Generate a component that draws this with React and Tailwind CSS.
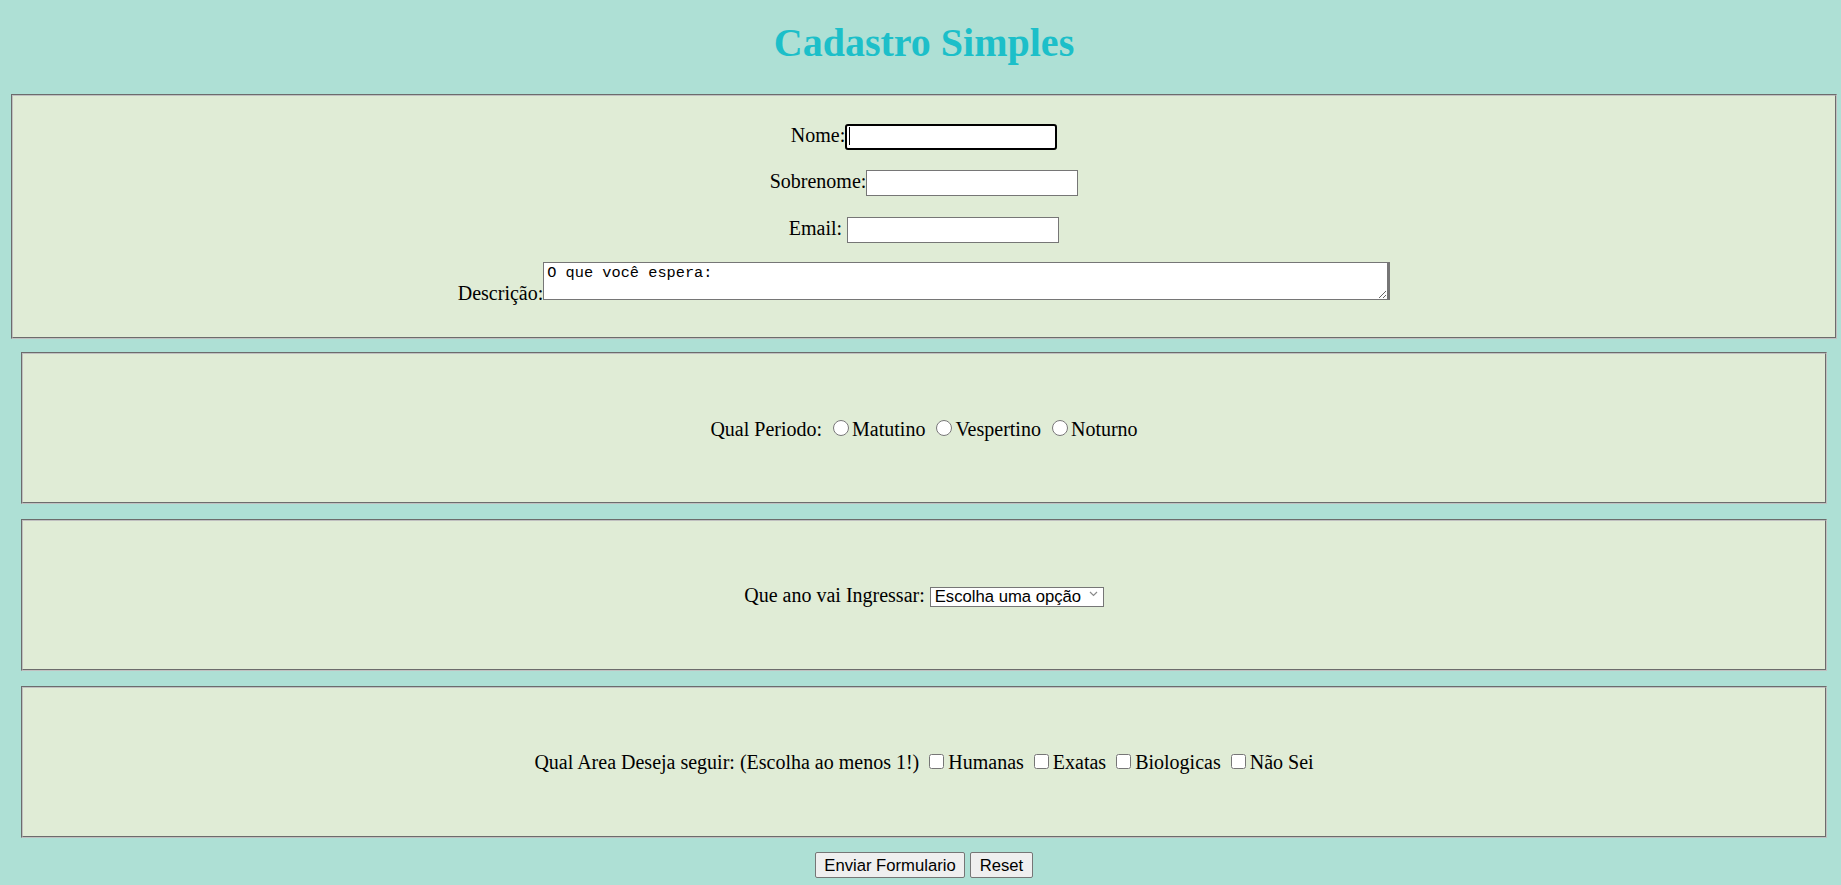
import React from 'react';

const boxClass = 'border-2 [border-style:groove] border-[#c0c0c0] bg-[#e0ecd6]';
const ctrlFont = "font-['Liberation_Sans',Arial,sans-serif] text-[16.67px]";
const inputClass = `w-[212px] h-[26px] px-[3px] bg-white border border-[#767676] align-baseline text-black ${ctrlFont}`;

const Radio = ({ name }) => (
    <input type="radio" name={name} className="w-[16px] h-[16px] ml-[6px] mr-[3px] mt-[4px] mb-0 align-baseline" />
);

const Check = () => (
    <input type="checkbox" className="w-[15px] h-[15px] ml-[5px] mr-[4px] mt-[4px] mb-[2px] align-baseline" />
);

const OptionBox = ({ children, className = '' }) => (
    <div className={`ml-[21px] w-[1806px] h-[152px] flex items-center justify-center ${boxClass} ${className}`}>
        <p className="leading-[24px] whitespace-nowrap">{children}</p>
    </div>
);

export default function App() {
    return (
        <div className="min-h-screen bg-[#aee0d5] pt-[21px] text-black text-[20px] font-['Liberation_Serif','Times_New_Roman',serif]">
            <div className="ml-[11px] w-[1826px]">
                <h1 className="text-center text-[40px] leading-[44px] font-bold text-[#1cbfc9] mb-[29px]">
                    Cadastro Simples
                </h1>
            </div>

            <form onSubmit={(e) => e.preventDefault()}>
                <div className={`ml-[11px] w-[1826px] ${boxClass} pt-[27px] pb-[37px] flex flex-col items-center`}>
                    <div className="h-[26px] leading-[24px] whitespace-nowrap">
                        Nome:
                        <span className="relative inline-block align-baseline">
                            <input type="text" className={`${inputClass} border-2 border-black rounded-[3px]`} />
                            <span className="absolute left-[4px] top-[4px] w-px h-[18px] bg-black" />
                        </span>
                    </div>
                    <div className="h-[26px] leading-[24px] mt-[20px] whitespace-nowrap">
                        Sobrenome:<input type="text" className={inputClass} />
                    </div>
                    <div className="h-[26px] leading-[24px] mt-[21px] whitespace-nowrap">
                        Email: <input type="email" className={inputClass} />
                    </div>
                    <div className="h-[38px] leading-[20px] mt-[20px] whitespace-nowrap">
                        Descrição:<textarea
                            defaultValue="O que você espera:"
                            className="align-baseline w-[847px] h-[38px] border border-[#767676] border-r-[3px] bg-white pl-[3px] pt-[1px] text-black font-['Liberation_Mono','DejaVu_Sans_Mono',monospace] text-[15.3px] leading-[18px]"
                        />
                    </div>
                </div>

                <OptionBox className="mt-[13px]">
                    Qual Periodo: <Radio name="periodo" />Matutino <Radio name="periodo" />Vespertino <Radio name="periodo" />Noturno
                </OptionBox>

                <OptionBox className="mt-[15px]">
                    Que ano vai Ingressar:{' '}
                    <span className="relative inline-block align-baseline">
                        <select className={`appearance-none w-[174px] h-[20px] bg-white border border-[#767676] pl-[4px] pr-[20px] align-baseline text-black leading-[18px] ${ctrlFont}`}>
                            <option>Escolha uma opção</option>
                            <option>2024</option>
                            <option>2025</option>
                        </select>
                        <svg className="absolute right-[6px] top-[8px] pointer-events-none" width="9" height="6" viewBox="0 0 9 6" fill="none">
                            <path d="M1 1l3.5 3.5L8 1" stroke="#8a8a8a" strokeWidth="1.2" />
                        </svg>
                    </span>
                </OptionBox>

                <OptionBox className="mt-[15px]">
                    Qual Area Deseja seguir: (Escolha ao menos 1!) <Check />Humanas <Check />Exatas <Check />Biologicas <Check />Não Sei
                </OptionBox>

                <div className="ml-[11px] w-[1826px] mt-[14px] flex justify-center gap-[5px]">
                    <button type="submit" className={`w-[150px] h-[26px] bg-[#efefef] border border-[#767676] rounded-[2px] text-black ${ctrlFont}`}>
                        Enviar Formulario
                    </button>
                    <button type="reset" className={`w-[63px] h-[26px] bg-[#efefef] border border-[#767676] rounded-[2px] text-black ${ctrlFont}`}>
                        Reset
                    </button>
                </div>
            </form>
        </div>
    );
}
